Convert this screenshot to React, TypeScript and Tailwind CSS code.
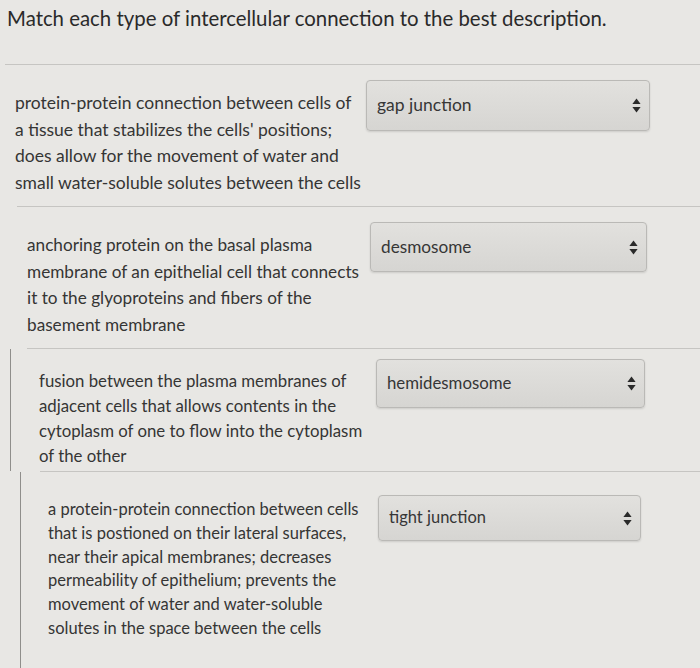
import React from "react";

type Item = {
  lines: string[];
  answer: string;
  wrap: string;
  textCol: string;
  size: string;
  lh: string;
  sectionPad: string;
  selectW: string;
  selectH: string;
};

const items: Item[] = [
  {
    lines: [
      "protein-protein connection between cells of",
      "a tissue that stabilizes the cells' positions;",
      "does allow for the movement of water and",
      "small water-soluble solutes between the cells",
    ],
    answer: "gap junction",
    wrap: "",
    textCol: "w-[366px] pl-[15px] pt-[10px]",
    size: "text-[17.5px]",
    lh: "leading-[26.5px]",
    sectionPad: "pt-[15px] pb-[10px]",
    selectW: "w-[284px]",
    selectH: "h-[51px]",
  },
  {
    lines: [
      "anchoring protein on the basal plasma",
      "membrane of an epithelial cell that connects",
      "it to the glyoproteins and fibers of the",
      "basement membrane",
    ],
    answer: "desmosome",
    wrap: "",
    textCol: "w-[370px] pl-[27px] pt-[10px]",
    size: "text-[17.2px]",
    lh: "leading-[26.5px]",
    sectionPad: "pt-[15px] pb-[10px]",
    selectW: "w-[277px]",
    selectH: "h-[50px]",
  },
  {
    lines: [
      "fusion between the plasma membranes of",
      "adjacent cells that allows contents in the",
      "cytoplasm of one to flow into the cytoplasm",
      "of the other",
    ],
    answer: "hemidesmosome",
    wrap: "ml-[10px] border-l border-[#8f8e8b]",
    textCol: "w-[365px] pl-[28px] pt-[9px]",
    size: "text-[16.8px]",
    lh: "leading-[25px]",
    sectionPad: "pt-[10px] pb-[3px]",
    selectW: "w-[269px]",
    selectH: "h-[49px]",
  },
  {
    lines: [
      "a protein-protein connection between cells",
      "that is postioned on their lateral surfaces,",
      "near their apical membranes; decreases",
      "permeability of epithelium; prevents the",
      "movement of water and water-soluble",
      "solutes in the space between the cells",
    ],
    answer: "tight junction",
    wrap: "ml-[20px] border-l border-[#8f8e8b]",
    textCol: "w-[357px] pl-[27px] pt-[3px]",
    size: "text-[16.5px]",
    lh: "leading-[23.8px]",
    sectionPad: "pt-[23px] pb-[40px]",
    selectW: "w-[263px]",
    selectH: "h-[46px]",
  },
];

const sepInset = ["ml-[5px]", "ml-[17px]", "ml-[27px]", "ml-[40px]"];

function Arrows() {
  return (
    <svg width="9" height="15" viewBox="0 0 9 15" className="shrink-0">
      <path d="M4.5 0.5 L8.6 6 L0.4 6 Z" fill="#2a2a2a" />
      <path d="M4.5 14.5 L8.6 9 L0.4 9 Z" fill="#2a2a2a" />
    </svg>
  );
}

export default function App() {
  return (
    <div
      className="w-[700px] h-[668px] overflow-hidden bg-[#e8e7e4] text-[#353534]"
      style={{ fontFamily: "Lato, 'Open Sans', 'Liberation Sans', sans-serif" }}
    >
      <h1 className="pl-[7px] pt-[4px] h-[64px] text-[20.4px] leading-[28px] font-normal text-[#2a2a2a]">
        Match each type of intercellular connection to the best description.
      </h1>
      {items.map((it, i) => (
        <React.Fragment key={i}>
          <div className={`h-px bg-[#c6c5c2] ${sepInset[i]}`} />
          <div className={`flex ${it.sectionPad} ${it.wrap}`}>
            <div className={`${it.textCol} shrink-0 ${it.size} ${it.lh} whitespace-nowrap`}>
              {it.lines.map((l, j) => (
                <div key={j}>{l}</div>
              ))}
            </div>
            <div
              className={`${it.selectW} ${it.selectH} shrink-0 flex items-center justify-between pl-[10px] pr-[8px] rounded-[4px] border border-[#bab9b6] bg-gradient-to-b from-[#e2e1de] to-[#d6d5d2] shadow-[0_1px_2px_rgba(0,0,0,0.12)] ${it.size} text-[#363636]`}
            >
              <span className="-mt-[1px]">{it.answer}</span>
              <Arrows />
            </div>
          </div>
        </React.Fragment>
      ))}
    </div>
  );
}
